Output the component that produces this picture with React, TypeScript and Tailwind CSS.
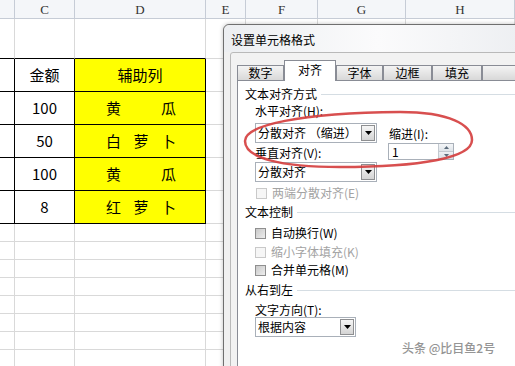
import React from 'react'

const cjk = { fontFamily: '"Noto Sans CJK SC", "Noto Sans", sans-serif' }

const headers = ['', 'C', 'D', 'E', 'F', 'G', 'H']
const rowHeights = [40, 33, 33, 33, 33, 33, 18, 18, 18, 18, 18, 18, 18, 18]

// table rows sit in rows 1..5, columns 0..2
const tableData: Record<number, [string, string]> = {
  1: ['金额', '辅助列'],
  2: ['100', '黄瓜'],
  3: ['50', '白萝卜'],
  4: ['100', '黄瓜'],
  5: ['8', '红萝卜'],
}

function Sheet() {
  return (
    <div className="w-[515px]" style={cjk}>
      <div className="grid grid-cols-[15px_60px_131px_40px_72px_88px_1fr] h-[19px] bg-[#f4f6f9]">
        {headers.map((h, i) => (
          <div
            key={i}
            className="border-r border-b border-[#c6ccd6] flex items-center justify-center text-[13px] text-[#333] leading-none"
            style={{ fontFamily: '"Liberation Serif", serif' }}
          >
            {h}
          </div>
        ))}
      </div>
      {rowHeights.map((h, r) => (
        <div
          key={r}
          className="grid grid-cols-[15px_60px_131px_40px_72px_88px_1fr]"
          style={{ height: h }}
        >
          {headers.map((_, c) => {
            const inTable = r >= 1 && r <= 5 && c <= 2
            const aboveTable = r === 0 && c <= 2
            let cls = 'border-r border-b border-[#d9d9d9]'
            if (inTable) cls = 'border-r border-b border-black'
            else if (aboveTable) cls = 'border-r border-b border-r-[#d9d9d9] border-b-black'
            const row = tableData[r]
            let content: React.ReactNode = null
            if (inTable && row && c === 1) content = row[0]
            if (inTable && row && c === 2) {
              content =
                r === 1 ? (
                  row[1]
                ) : (
                  <div className="w-full flex justify-between pl-[31px] pr-[29px]">
                    {row[1].split('').map((ch, k) => (
                      <span key={k}>{ch}</span>
                    ))}
                  </div>
                )
            }
            return (
              <div
                key={c}
                className={`${cls} ${inTable && c === 2 ? 'bg-[#ffff00]' : 'bg-white'} flex items-center justify-center text-[15px] text-black`}
              >
                {content}
              </div>
            )
          })}
        </div>
      ))}
    </div>
  )
}

function Arrow() {
  return (
    <div className="w-[14px] h-[16px] mr-[1px] border border-[#8e8f91] bg-gradient-to-b from-[#f6f6f6] to-[#d4d4d4] flex items-center justify-center">
      <svg width="7" height="4" viewBox="0 0 7 4">
        <path d="M0 0H7L3.5 4Z" fill="#000" />
      </svg>
    </div>
  )
}

function Select({ text, width }: { text: string; width: string }) {
  return (
    <div className={`${width} h-[20px] border border-[#a9b0b9] bg-white flex items-center justify-between`}>
      <span className="pl-[2px] text-[12px] leading-[14px] text-black whitespace-nowrap">{text}</span>
      <Arrow />
    </div>
  )
}

function Check({ label, disabled, className }: { label: string; disabled?: boolean; className?: string }) {
  return (
    <div className={`flex items-center h-[14px] ${className ?? ''}`}>
      <div
        className={`w-[11px] h-[11px] border ${
          disabled
            ? 'border-[#c9c9c9] bg-[#f6f6f6]'
            : 'border-[#8f8f8f] bg-gradient-to-br from-[#c9c9c9] to-[#eeeeee]'
        }`}
      />
      <span className={`ml-[5px] text-[12px] leading-[14px] ${disabled ? 'text-[#a3a3a3]' : 'text-black'}`}>
        {label}
      </span>
    </div>
  )
}

function Section({ title, className }: { title: string; className?: string }) {
  return (
    <div className={`flex items-center h-[14px] ${className ?? ''}`}>
      <span className="text-[12px] leading-[14px] text-black whitespace-nowrap">{title}</span>
      <div className="flex-1 h-px bg-[#d5dde3] ml-[4px]" />
    </div>
  )
}

const tabs = [
  { label: '数字', w: 'w-[52px]' },
  { label: '对齐', w: 'w-[57px]', active: true },
  { label: '字体', w: 'w-[52px]' },
  { label: '边框', w: 'w-[54px]' },
  { label: '填充', w: 'w-[55px]' },
  { label: '', w: 'w-[54px]' },
]

function Dialog() {
  return (
    <div
      className="absolute left-[223px] top-[24px] w-[310px] h-[360px] border border-[#6f6f6f] rounded-tl-[6px] bg-[#f0f0f0] shadow-[0_0_4px_rgba(0,0,0,0.25)]"
      style={cjk}
    >
      <div className="h-[27px] pl-[7px] pt-[8px] rounded-tl-[6px] bg-gradient-to-r from-[#eceef1] via-[#fbfbfc] to-[#eceef1] text-[12px] leading-[14px] text-black">
        设置单元格格式
      </div>
      <div className="ml-[6px] h-[330px] border border-[#b9b9b9] rounded-[3px] bg-[#f2f2f2] pl-[6px] pt-[7px]">
        <div className="flex items-end h-[20px]">
          {tabs.map((t, i) =>
            t.active ? (
              <div
                key={i}
                className={`${t.w} h-[21px] -mb-px relative z-10 border border-b-0 border-[#898c95] bg-white flex items-center justify-center text-[12px] leading-[14px] pb-[2px]`}
              >
                {t.label}
              </div>
            ) : (
              <div
                key={i}
                className={`${t.w} h-[15px] border border-b-0 border-[#898c95] bg-gradient-to-b from-[#f4f4f4] to-[#d8d8d8] flex items-center justify-center text-[12px] leading-[14px]`}
              >
                {t.label}
              </div>
            )
          )}
        </div>
        <div className="h-[300px] border border-[#898c95] bg-white pl-[7px] flex flex-col">
          <Section title="文本对齐方式" className="mt-[6px]" />
          <div className="ml-[10px] mt-[3px] text-[12px] leading-[14px]">水平对齐(H):</div>
          <div className="ml-[10px] mt-[5px] flex">
            <div className="flex flex-col">
              <Select text="分散对齐 （缩进）" width="w-[122px]" />
              <div className="mt-[3px] text-[12px] leading-[14px]">垂直对齐(V):</div>
              <div className="mt-[2px]">
                <Select text="分散对齐" width="w-[122px]" />
              </div>
            </div>
            <div className="ml-[12px] flex flex-col">
              <div className="mt-[4px] text-[12px] leading-[14px]">缩进(I):</div>
              <div className="-ml-px mt-[2px] w-[66px] h-[17px] border border-[#a9b0b9] bg-white flex items-center justify-between">
                <span className="pl-[3px] text-[12px] leading-[14px]">1</span>
                <div className="w-[15px] h-[15px] flex flex-col border-l border-[#c3c9d0]">
                  <div className="flex-1 flex items-center justify-center bg-gradient-to-b from-[#f4f6f8] to-[#dfe4e9] border-b border-[#c3c9d0]">
                    <svg width="5" height="3" viewBox="0 0 5 3">
                      <path d="M0 3H5L2.5 0Z" fill="#5b6b7b" />
                    </svg>
                  </div>
                  <div className="flex-1 flex items-center justify-center bg-gradient-to-b from-[#eef1f4] to-[#d7dde3]">
                    <svg width="5" height="3" viewBox="0 0 5 3">
                      <path d="M0 0H5L2.5 3Z" fill="#5b6b7b" />
                    </svg>
                  </div>
                </div>
              </div>
            </div>
          </div>
          <Check label="两端分散对齐(E)" disabled className="ml-[11px] mt-[4px]" />
          <Section title="文本控制" className="mt-[5px]" />
          <Check label="自动换行(W)" className="ml-[10px] mt-[7px]" />
          <Check label="缩小字体填充(K)" disabled className="ml-[10px] mt-[5px]" />
          <Check label="合并单元格(M)" className="ml-[10px] mt-[4px]" />
          <Section title="从右到左" className="mt-[6px]" />
          <div className="ml-[10px] mt-[6px] text-[12px] leading-[14px]">文字方向(T):</div>
          <div className="ml-[10px]">
            <Select text="根据内容" width="w-[101px]" />
          </div>
        </div>
      </div>
    </div>
  )
}

export default function App() {
  return (
    <div className="relative w-[515px] h-[366px] overflow-hidden bg-white">
      <Sheet />
      <Dialog />
      {/* hand-drawn red ring */}
      <svg className="absolute left-0 top-0 pointer-events-none" width="515" height="366">
        <path
          d="M245 141 C245 125 300 113 400 112 C450 112 472 125 472 140 C472 158 420 167 340 167 C280 167 245 158 245 141 Z"
          fill="none"
          stroke="#d43c3c"
          strokeWidth="2.5"
          opacity="0.9"
        />
      </svg>
      <div
        className="absolute left-[402px] top-[341px] text-[12px] leading-[14px] font-medium text-[#8a8a8a] opacity-90 whitespace-nowrap"
        style={cjk}
      >
        头条 @比目鱼2号
      </div>
    </div>
  )
}
